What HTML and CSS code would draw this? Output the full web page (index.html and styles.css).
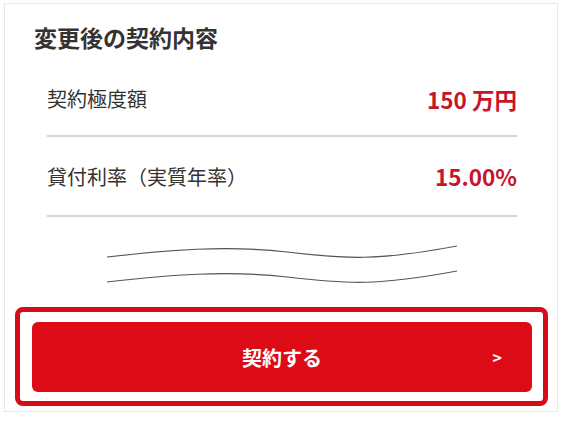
FILE: index.html
```html
<!DOCTYPE html>
<html lang="ja">
<head>
<meta charset="utf-8">
<title>変更後の契約内容</title>
<link rel="stylesheet" href="styles.css">
</head>
<body>
<main class="page">
  <section class="card">
    <h2 class="card-title">変更後の契約内容</h2>
    <dl class="terms">
      <div class="term-row term-row-limit">
        <dt class="term-label">契約極度額</dt>
        <dd class="term-value">150 万円</dd>
      </div>
      <div class="term-row term-row-rate">
        <dt class="term-label">貸付利率（実質年率）</dt>
        <dd class="term-value">15.00%</dd>
      </div>
    </dl>
    <div class="omission">
      <svg class="omission-mark" width="350" height="44" viewBox="0 0 350 44" aria-hidden="true">
        <path d="M0 14 C 60 7, 120 2, 180 9 S 270 18, 350 3" />
        <path d="M0 39 C 60 32, 120 27, 180 34 S 270 43, 350 28" />
      </svg>
    </div>
    <div class="action-frame">
      <button class="action-button" type="button">
        <span class="action-label">契約する</span>
        <span class="action-arrow">&gt;</span>
      </button>
    </div>
  </section>
</main>
</body>
</html>
```

FILE: styles.css
```css
html, body {
  margin: 0;
  padding: 0;
  background: #ffffff;
}

body {
  font-family: "Noto Sans CJK JP", "Noto Sans", sans-serif;
  color: #333333;
}

.page {
  padding: 3px 6px 0 4px;
}

.card {
  border: 1px solid #e8e8e8;
  padding: 17px 9px 5px 10px;
}

.card-title {
  margin: 0 0 0 19px;
  font-size: 23px;
  line-height: 32px;
  font-weight: 700;
  color: #333333;
}

.terms {
  margin: 0;
  padding: 0 31px 0 32px;
}

.term-row {
  display: flex;
  align-items: center;
  justify-content: space-between;
  box-sizing: border-box;
  border-bottom: 2px solid #d6d6d6;
}

.term-row-limit {
  height: 84px;
  padding-top: 9px;
}

.term-row-rate {
  height: 80px;
  padding-top: 0;
}

.term-label {
  margin: 0;
  font-size: 20px;
  font-weight: 400;
  color: #333333;
}

.term-value {
  margin: 0;
  font-size: 22.5px;
  font-weight: 700;
  color: #c8142b;
}

.omission {
  display: flex;
  justify-content: center;
  padding: 26px 0 20px;
}

.omission-mark {
  display: block;
}

.omission-mark path {
  fill: none;
  stroke: #555555;
  stroke-width: 1.2;
}

.action-frame {
  border: 5px solid #d80c18;
  border-radius: 8px;
  padding: 10px 11px 9px 12px;
}

.action-button {
  position: relative;
  display: flex;
  align-items: center;
  justify-content: center;
  width: 100%;
  height: 70px;
  border: none;
  border-radius: 6px;
  background: #dc0b15;
  color: #ffffff;
  font-family: inherit;
  font-size: 20px;
  font-weight: 700;
  cursor: pointer;
}

.action-arrow {
  position: absolute;
  right: 30px;
  top: 50%;
  transform: translateY(-52%);
  font-size: 16px;
  font-weight: 700;
}
```
